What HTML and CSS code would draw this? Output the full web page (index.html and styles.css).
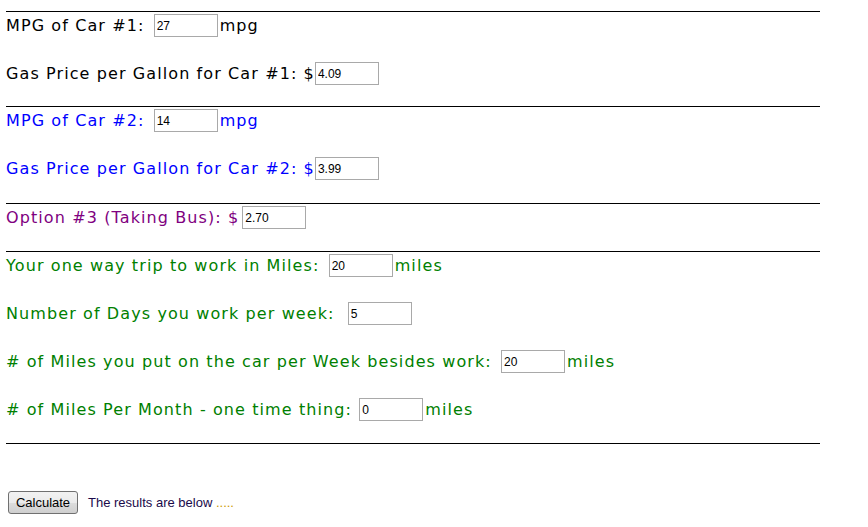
FILE: index.html
```html
<!DOCTYPE html>
<html>
<head>
<meta charset="utf-8">
<link rel="stylesheet" href="styles.css">
</head>
<body>
<div class="page">
  <div class="rule"></div>
  <div class="section s1">
    <div class="row">MPG of Car #1: <input class="field sp" value="27"><span class="unit">mpg</span></div>
    <div class="row">Gas Price per Gallon for Car #1: $<input class="field" value="4.09"></div>
  </div>
  <div class="rule"></div>
  <div class="section s2 blue">
    <div class="row">MPG of Car #2: <input class="field sp" value="14"><span class="unit">mpg</span></div>
    <div class="row">Gas Price per Gallon for Car #2: $<input class="field" value="3.99"></div>
  </div>
  <div class="rule"></div>
  <div class="section s3 purple">
    <div class="row">Option #3 (Taking Bus): $<input class="field sp" value="2.70"></div>
  </div>
  <div class="rule"></div>
  <div class="section s4 green">
    <div class="row">Your one way trip to work in Miles: <input class="field sp" value="20"><span class="unit">miles</span></div>
    <div class="row">Number of Days you work per week: <input class="field sp2" value="5"></div>
    <div class="row"># of Miles you put on the car per Week besides work: <input class="field sp" value="20"><span class="unit">miles</span></div>
    <div class="row"># of Miles Per Month - one time thing: <input class="field sp1" value="0"><span class="unit">miles</span></div>
  </div>
  <div class="rule"></div>
  <div class="actions">
    <button class="btn">Calculate</button>
    <span class="result">The results are below <span class="dots">.....</span></span>
  </div>
</div>
</body>
</html>
```
FILE: styles.css
```css
html, body {
  margin: 0;
  padding: 0;
  background: #ffffff;
}
.page {
  padding: 11px 0 0 6px;
  width: 814px;
  font-family: "DejaVu Sans", Verdana, sans-serif;
  font-size: 16px;
  color: #000000;
}
.rule {
  height: 1px;
  background: #000000;
}
.section {
  display: flex;
  flex-direction: column;
  gap: 24px;
  padding-bottom: 23px;
}
.s1 { padding-bottom: 22px; }
.s2 { padding-bottom: 24px; }
.row {
  height: 24px;
  line-height: 27px;
  letter-spacing: 1.1px;
  white-space: nowrap;
}
.blue { color: #0000ff; }
.purple { color: #800080; }
.green { color: #008000; }
.field {
  box-sizing: border-box;
  width: 64px;
  height: 23px;
  margin: 0 2px 0 0;
  padding: 0 2px;
  border: 1px solid #a9a9a9;
  font-family: "Liberation Sans", Arial, sans-serif;
  font-size: 12px;
  letter-spacing: 0;
  color: #000000;
  background: #ffffff;
  outline: none;
  vertical-align: middle;
  position: relative;
  top: -1px;
}
.sp { margin-left: 3px; }
.sp1 { margin-left: 1px; }
.sp2 { margin-left: 7px; }
.actions {
  display: flex;
  align-items: center;
  margin-top: 47px;
  margin-left: 2px;
  height: 23px;
}
.btn {
  box-sizing: border-box;
  width: 70px;
  height: 23px;
  padding: 0;
  border: 1px solid #707070;
  border-radius: 3px;
  background: linear-gradient(#f2f2f2 0%, #ebebeb 50%, #dddddd 51%, #cfcfcf 100%);
  font-family: "Liberation Sans", Arial, sans-serif;
  font-size: 13px;
  color: #000000;
}
.result {
  margin-left: 10px;
  font-family: "Liberation Sans", Arial, sans-serif;
  font-size: 13px;
  color: #1a0a4a;
}
.dots { color: #cc9900; }
```
